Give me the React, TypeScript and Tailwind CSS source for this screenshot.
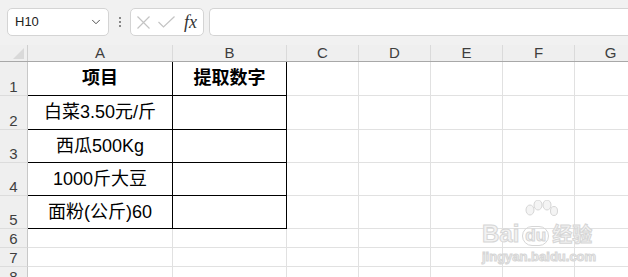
import { ChevronDown } from "lucide-react";

const cols = [
  { label: "A", w: "w-[145px]" },
  { label: "B", w: "w-[114px]" },
  { label: "C", w: "w-[72px]" },
  { label: "D", w: "w-[72px]" },
  { label: "E", w: "w-[72px]" },
  { label: "F", w: "w-[72px]" },
  { label: "G", w: "w-[72px]" },
];

const rows = [
  { n: 1, h: "h-[34px]", a: "项目", b: "提取数字", bold: true },
  { n: 2, h: "h-[34px]", a: "白菜3.50元/斤", b: "" },
  { n: 3, h: "h-[33px]", a: "西瓜500Kg", b: "" },
  { n: 4, h: "h-[33px]", a: "1000斤大豆", b: "" },
  { n: 5, h: "h-[33px]", a: "面粉(公斤)60", b: "" },
  { n: 6, h: "h-[19px]" },
  { n: 7, h: "h-[19px]" },
  { n: 8, h: "h-[19px]" },
];

const font = "font-['Liberation_Sans','Noto_Sans_CJK_SC',sans-serif]";

export default function App() {
  return (
    <div className={`relative w-[628px] h-[277px] overflow-hidden bg-white ${font}`}>
      {/* formula bar */}
      <div className="h-[45px] bg-[#f1f1f1] flex items-start pt-2 pl-[7px]">
        <div className="w-[102px] h-[28px] bg-white border border-[#d4d4d4] rounded-[5px] flex items-center justify-between pl-[7px] pr-[5px]">
          <span className="text-[13px] text-[#222]">H10</span>
          <ChevronDown className="w-[14px] h-[14px] text-[#444]" strokeWidth={1.6} />
        </div>
        <div className="w-[21px] h-[28px] flex flex-col items-center justify-center gap-[2px]">
          <span className="w-[2px] h-[2px] bg-[#888]" />
          <span className="w-[2px] h-[2px] bg-[#888]" />
          <span className="w-[2px] h-[2px] bg-[#888]" />
        </div>
        <div className="w-[74px] h-[28px] bg-white border border-[#d4d4d4] rounded-[5px] flex items-center pl-[6px]">
          <svg width="13" height="13" viewBox="0 0 13 13" stroke="#c4c4c4" strokeWidth="1.2" fill="none">
            <path d="M0.5 0.5 L12.5 12.5 M12.5 0.5 L0.5 12.5" />
          </svg>
          <svg className="ml-[8px]" width="17" height="12" viewBox="0 0 17 12" stroke="#c4c4c4" strokeWidth="1.2" fill="none">
            <path d="M0.5 6 L5.5 11 L16.5 0.5" />
          </svg>
          <span className="ml-[9px] text-[18px] leading-[18px] italic text-[#333] font-['Liberation_Serif',serif]">fx</span>
        </div>
        <div className="ml-[5px] flex-1 h-[28px] bg-white border border-[#d4d4d4] rounded-l-[5px] border-r-0" />
      </div>

      {/* column headers */}
      <div className="flex h-[17px] bg-[#efefef] border-b border-[#a8a8a8]">
        <div className="w-[28px] shrink-0 border-r border-[#cfcfcf] relative">
          <div className="absolute right-[3px] bottom-[2px] w-0 h-0 border-l-[11px] border-l-transparent border-b-[11px] border-b-[#d9d9d9]" />
        </div>
        {cols.map((c) => (
          <div
            key={c.label}
            className={`${c.w} shrink-0 border-r border-[#dadada] flex items-end justify-center text-[15px] leading-[16px] text-[#3e3e3e]`}
          >
            {c.label}
          </div>
        ))}
      </div>

      {/* rows */}
      {rows.map((r) => {
        const inTable = r.n <= 5;
        return (
          <div key={r.n} className={`flex ${r.h}`}>
            <div className="w-[28px] shrink-0 bg-[#efefef] border-r border-[#c8c8c8] border-b border-b-[#dcdcdc] flex items-end justify-center text-[15px] leading-[17px] text-[#3e3e3e]">
              {r.n}
            </div>
            {cols.map((c, i) => {
              const black = inTable && i < 2;
              const text = i === 0 ? r.a : i === 1 ? r.b : "";
              return (
                <div
                  key={c.label}
                  className={`${c.w} shrink-0 border-r border-b ${
                    black ? "border-black" : "border-[#e1e1e1]"
                  } flex items-center justify-center text-[18px] text-black ${
                    r.bold ? "font-bold" : ""
                  }`}
                >
                  {text}
                </div>
              );
            })}
          </div>
        );
      })}

      {/* watermark */}
      <div className="absolute left-[482px] top-[222px] flex flex-col items-start text-[#f2f2f2] [-webkit-text-stroke:1px_#d6d6d6] pointer-events-none">
        <div className="relative flex items-end gap-[3px] text-[24px] font-bold leading-[24px] font-['Liberation_Sans',sans-serif]">
          <span>Bai</span>
          <span className="rounded-full border border-[#d6d6d6] px-[2px] text-[17px] leading-[18px]">du</span>
          <span className="text-[20px] font-['Noto_Sans_CJK_SC',sans-serif]">经验</span>
          <svg className="absolute left-[40px] top-[-22px]" width="36" height="26" viewBox="0 0 36 26" fill="#f4f4f4" stroke="#d6d6d6">
            <ellipse cx="8" cy="10" rx="4" ry="5" />
            <ellipse cx="16" cy="5" rx="4" ry="5" />
            <ellipse cx="25" cy="5" rx="4" ry="5" />
            <ellipse cx="32" cy="11" rx="3.5" ry="4.5" />
          </svg>
        </div>
        <div className="text-[13px] leading-[16px] mt-[3px] font-['Liberation_Sans',sans-serif] font-bold">
          jingyan.baidu.com
        </div>
      </div>
    </div>
  );
}
